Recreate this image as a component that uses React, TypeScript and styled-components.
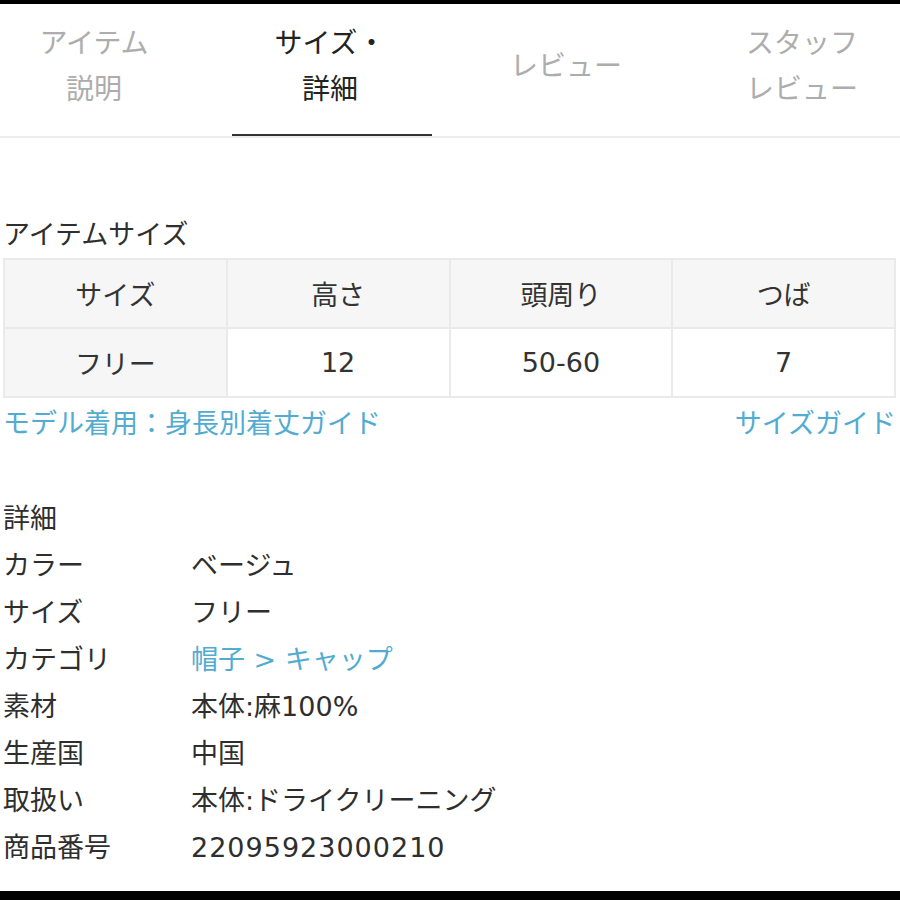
import React from 'react';
import styled, { createGlobalStyle } from 'styled-components';

const GlobalStyle = createGlobalStyle`
  html, body {
    margin: 0;
    padding: 0;
    background: #000;
  }
  body {
    font-family: "DejaVu Sans", "Noto Sans CJK JP", sans-serif;
    color: #333;
  }
`;

const tabs = [
  { lines: ['アイテム', '説明'], active: false },
  { lines: ['サイズ・', '詳細'], active: true },
  { lines: ['レビュー'], active: false },
  { lines: ['スタッフ', 'レビュー'], active: false },
];

const sizeHead = ['サイズ', '高さ', '頭周り', 'つば'];
const sizeRow = ['フリー', '12', '50-60', '7'];

const details: { label: string; value: string; link?: boolean; numeric?: boolean }[] = [
  { label: 'カラー', value: 'ベージュ' },
  { label: 'サイズ', value: 'フリー' },
  { label: 'カテゴリ', value: '帽子 > キャップ', link: true },
  { label: '素材', value: '本体:麻100%' },
  { label: '生産国', value: '中国' },
  { label: '取扱い', value: '本体:ドライクリーニング' },
  { label: '商品番号', value: '22095923000210', numeric: true },
];

const App = () => {
  return (
    <>
      <GlobalStyle />
      <Page>
        <TabBar>
          <TabStrip>
            {tabs.map((t) => (
              <Tab key={t.lines.join('')} active={t.active}>
                {t.lines.map((l) => (
                  <span key={l}>{l}</span>
                ))}
              </Tab>
            ))}
          </TabStrip>
        </TabBar>

        <Content>
          <SectionTitle>アイテムサイズ</SectionTitle>
          <SizeTable>
            <tbody>
              <tr>
                {sizeHead.map((h) => (
                  <HeadCell key={h}>{h}</HeadCell>
                ))}
              </tr>
              <tr>
                {sizeRow.map((v, i) =>
                  i === 0 ? <HeadCell key={v}>{v}</HeadCell> : <BodyCell key={v}>{v}</BodyCell>
                )}
              </tr>
            </tbody>
          </SizeTable>

          <LinkRow>
            <TextLink>モデル着用：身長別着丈ガイド</TextLink>
            <TextLink>サイズガイド</TextLink>
          </LinkRow>

          <DetailTitle>詳細</DetailTitle>
          <DetailList>
            {details.map((d) => (
              <DetailRow key={d.label}>
                <DetailLabel>{d.label}</DetailLabel>
                {d.link ? (
                  <TextLink>{d.value}</TextLink>
                ) : (
                  <DetailValue numeric={!!d.numeric}>{d.value}</DetailValue>
                )}
              </DetailRow>
            ))}
          </DetailList>
        </Content>
      </Page>
    </>
  );
};

const Page = styled.div`
  width: 900px;
  height: 900px;
  box-sizing: border-box;
  border-top: 4px solid #000;
  border-bottom: 9px solid #000;
  background: #fff;
  overflow: hidden;
`;

const TabBar = styled.div`
  height: 132px;
  border-bottom: 2px solid #ececec;
  overflow: hidden;
`;

const TabStrip = styled.div`
  display: flex;
  height: 100%;
  margin-left: -24px;
`;

type TabProps = { active: boolean };

const Tab = styled.div<TabProps>`
  position: relative;
  flex: 0 0 236px;
  display: flex;
  flex-direction: column;
  align-items: center;
  justify-content: center;
  padding-bottom: 6px;
  box-sizing: border-box;
  font-size: 28px;
  line-height: 46px;
  color: ${(p) => (p.active ? '#222' : '#adadad')};

  &::after {
    content: '';
    display: ${(p) => (p.active ? 'block' : 'none')};
    position: absolute;
    left: 20px;
    right: 16px;
    bottom: -1px;
    height: 3px;
    background: #333;
  }
`;

const Content = styled.div`
  padding: 0 4px 0 3px;
  font-size: 27px;
`;

const SectionTitle = styled.h2`
  margin: 79px 0 5px;
  font-size: 27px;
  font-weight: 400;
  line-height: 36px;
  color: #2e2e2e;
`;

const SizeTable = styled.table`
  width: 893px;
  table-layout: fixed;
  border-collapse: separate;
  border-spacing: 2px;
  background: #eaeaea;
`;

const HeadCell = styled.td`
  height: 67px;
  padding: 0;
  text-align: center;
  background: #f6f6f6;
  color: #333;
`;

const BodyCell = styled(HeadCell)`
  background: #fff;
`;

const LinkRow = styled.div`
  display: flex;
  justify-content: space-between;
  margin-top: 8px;
  line-height: 36px;
`;

const TextLink = styled.span`
  color: #52abd0;
`;

const DetailTitle = styled.h3`
  margin: 53px 0 0;
  font-size: 27px;
  font-weight: 400;
  line-height: 47px;
  color: #2e2e2e;
`;

const DetailList = styled.div`
  display: flex;
  flex-direction: column;
`;

const DetailRow = styled.div`
  display: grid;
  grid-template-columns: 188px 1fr;
  line-height: 47px;
`;

const DetailLabel = styled.span`
  color: #2e2e2e;
`;

const DetailValue = styled.span<{ numeric: boolean }>`
  color: #2e2e2e;
  letter-spacing: ${(p) => (p.numeric ? '1px' : 'normal')};
`;

export default App;
